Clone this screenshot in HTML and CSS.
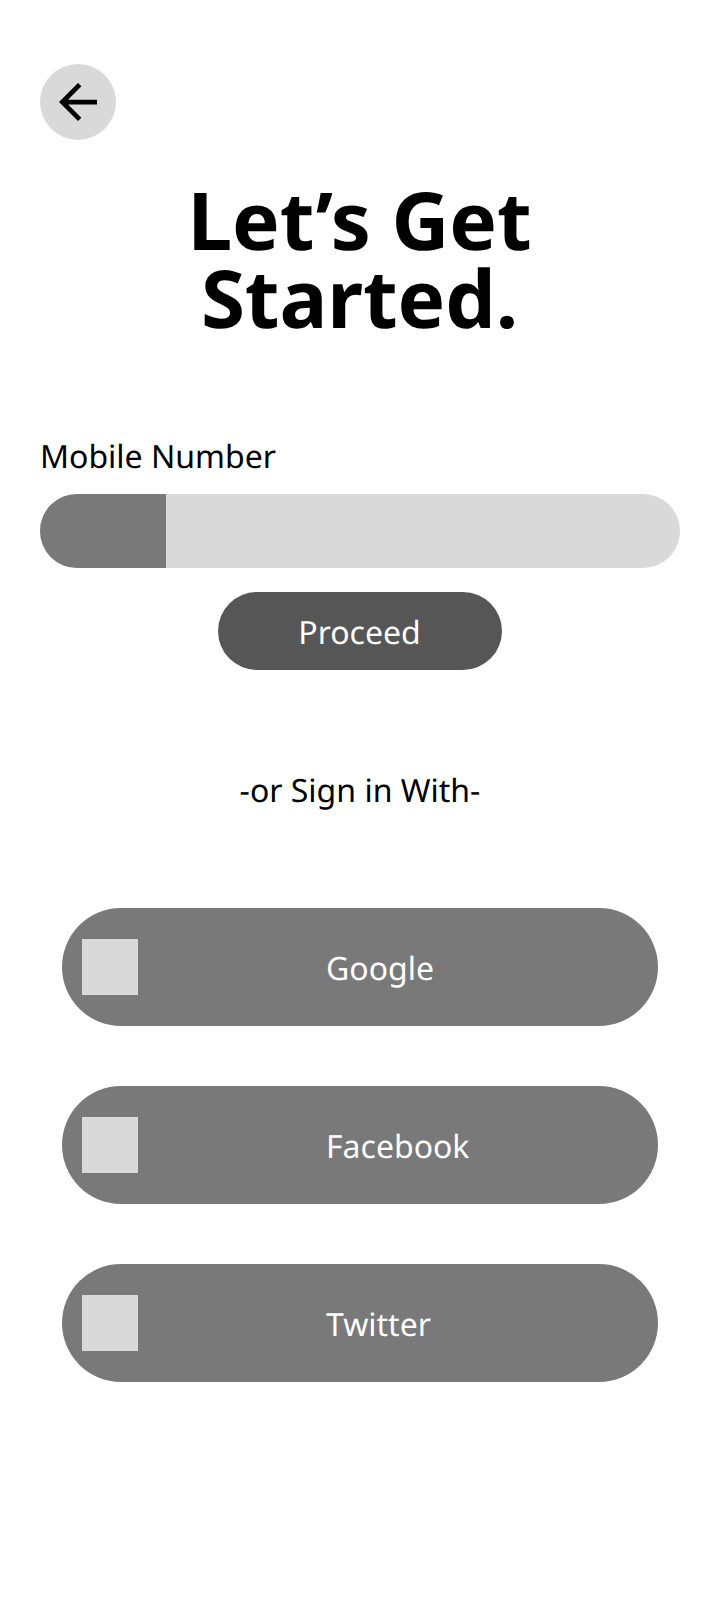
FILE: index.html
```html
<!DOCTYPE html>
<html lang="en">
<head>
<meta charset="utf-8">
<title>Get Started</title>
<link rel="stylesheet" href="styles.css">
</head>
<body>
<main class="screen">
  <button class="back" aria-label="Back"><svg class="back-icon" viewBox="4 4 16 16"><path d="M20 11H7.83l5.59-5.59L12 4l-8 8 8 8 1.41-1.41L7.83 13H20v-2z"/></svg></button>
  <h1 class="title">Let’s Get<br>Started.</h1>
  <label class="label">Mobile Number</label>
  <div class="field"><div class="prefix"></div></div>
  <button class="proceed">Proceed</button>
  <p class="divider">-or Sign in With-</p>
  <div class="providers">
    <button class="provider"><span class="logo"></span><span class="name">Google</span></button>
    <button class="provider"><span class="logo"></span><span class="name">Facebook</span></button>
    <button class="provider"><span class="logo"></span><span class="name">Twitter</span></button>
  </div>
</main>
</body>
</html>
```
FILE: styles.css
```css
* { box-sizing: border-box; }
body { margin: 0; background: #fff; }
.screen {
  display: flex;
  flex-direction: column;
  align-items: center;
  height: 1600px;
  padding: 64px 40px 0;
  font: 32px/44px "Noto Sans", sans-serif;
  text-rendering: geometricPrecision;
  color: #000;
}
button { border: 0; padding: 0; font: inherit; text-rendering: inherit; color: #fff; }
.back {
  display: flex;
  align-items: center;
  justify-content: center;
  align-self: flex-start;
  width: 76px;
  height: 76px;
  border-radius: 50%;
  background: #d9d9d9;
}
.back-icon { width: 38px; height: 38px; }
.title { margin: 41px 1px 0 0; font-size: 80px; line-height: 78px; font-weight: 700; letter-spacing: -0.1px; text-align: center; }
.label { align-self: flex-start; margin-top: 98px; }
.field {
  width: 640px;
  height: 74px;
  margin-top: 15px;
  border-radius: 37px;
  background: #d9d9d9;
  overflow: hidden;
}
.prefix { width: 126px; height: 100%; background: #797979; }
.proceed { width: 284px; height: 78px; margin-top: 24px; padding: 4px 1px 0 0; border-radius: 39px; background: #565656; }
.divider { margin: 99px 0 0; }
.providers { display: flex; flex-direction: column; gap: 60px; margin-top: 95px; }
.provider {
  display: flex;
  align-items: center;
  width: 596px;
  height: 118px;
  padding-left: 20px;
  border-radius: 59px;
  background: #797979;
}
.logo { width: 56px; height: 56px; margin-right: 188px; background: #d9d9d9; }
.name { padding-top: 4px; }
```
